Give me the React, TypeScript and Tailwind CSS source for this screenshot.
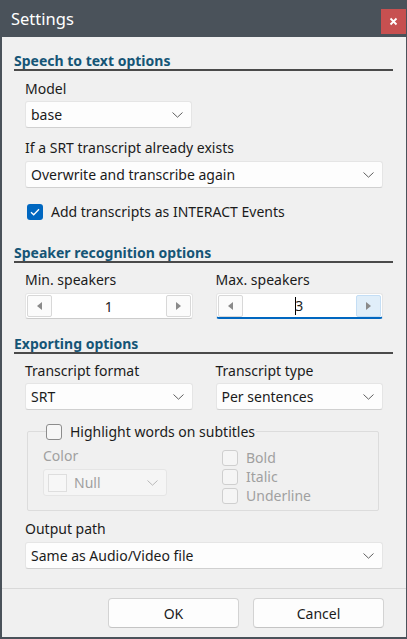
import React from "react";

function Chevron({ disabled = false }: { disabled?: boolean }) {
  return (
    <svg width="11" height="6" viewBox="0 0 11 6" className="shrink-0">
      <path d="M0.5 0.5 L5.5 5.2 L10.5 0.5" fill="none" stroke={disabled ? "#b8b8b8" : "#5f5f5f"} strokeWidth="1" />
    </svg>
  );
}

function Select({ value, className = "" }: { value: string; className?: string }) {
  return (
    <div
      className={`flex h-[27px] items-center justify-between rounded-[3px] border border-[#e5e5e5] border-b-[#d0d0d0] bg-[#fdfdfd] pl-[5px] pr-[8px] text-[#1b1b1b] ${className}`}
    >
      <span>{value}</span>
      <Chevron />
    </div>
  );
}

function Header({ children, className = "" }: { children: React.ReactNode; className?: string }) {
  return (
    <div className={`h-[19px] border-b-2 border-[#4a4a4a] text-[14px] font-bold leading-[17px] text-[#155576] ${className}`}>
      {children}
    </div>
  );
}

function Label({ children, className = "" }: { children: React.ReactNode; className?: string }) {
  return <div className={`h-[18px] leading-[18px] ${className}`}>{children}</div>;
}

function Box({ checked = false, disabled = false }: { checked?: boolean; disabled?: boolean }) {
  if (checked) {
    return (
      <span className="flex h-[16px] w-[16px] shrink-0 items-center justify-center rounded-[3px] bg-[#0067c0]">
        <svg width="10" height="8" viewBox="0 0 10 8">
          <path d="M1 4.2 L3.7 6.8 L9 1.3" fill="none" stroke="#fff" strokeWidth="1.3" />
        </svg>
      </span>
    );
  }
  return (
    <span
      className={`h-[16px] w-[16px] shrink-0 rounded-[3px] border ${
        disabled ? "border-[#cfcfcf] bg-[#f5f5f5]" : "border-[#8c8c8c] bg-[#f7f7f7]"
      }`}
    />
  );
}

function Spin({ value, focused = false }: { value: string; focused?: boolean }) {
  return (
    <div
      className={`flex h-[26px] items-center rounded-[3px] border border-[#e5e5e5] bg-white px-[1px] ${
        focused ? "border-b-2 border-b-[#0067c0]" : "border-b-[#cccccc]"
      }`}
    >
      <span className="flex h-[22px] w-[25px] items-center justify-center rounded-[2px] border border-[#d8d8d8] bg-[#fbfbfb]">
        <svg width="5" height="8" viewBox="0 0 5 8">
          <path d="M5 0 L0 4 L5 8 Z" fill="#8a8a8a" />
        </svg>
      </span>
      <span className="flex flex-1 items-center justify-center text-[#1b1b1b]">
        {focused && <span className="mr-[-1px] inline-block h-[18px] w-px bg-black" />}
        {value}
      </span>
      <span
        className={`flex h-[22px] w-[25px] items-center justify-center rounded-[2px] border ${
          focused ? "border-[#c4def5] bg-[#e0eef9]" : "border-[#d8d8d8] bg-[#fbfbfb]"
        }`}
      >
        <svg width="5" height="8" viewBox="0 0 5 8">
          <path d="M0 0 L5 4 L0 8 Z" fill="#8a8a8a" />
        </svg>
      </span>
    </div>
  );
}

export default function App() {
  return (
    <div className="flex h-[639px] w-[407px] flex-col bg-[#4a525a] pb-[2px] pl-[2px] pr-[1px] font-['Noto_Sans',sans-serif] text-[14px] text-[#1b1b1b]">
      {/* title bar */}
      <div className="flex h-[37px] shrink-0 items-start">
        <span className="mt-[7px] pl-[9px] text-[16.5px] leading-[24px] text-white">Settings</span>
        <button className="ml-auto mt-[9px] flex h-[25px] w-[25px] items-center justify-center bg-[#c75050]">
          <svg width="9" height="9" viewBox="0 0 9 9">
            <path d="M1.5 1.5 L7.5 7.5 M7.5 1.5 L1.5 7.5" stroke="#fff" strokeWidth="1.8" />
          </svg>
        </button>
      </div>

      <div className="flex flex-1 flex-col bg-[#f0f0f0]">
        <div className="flex-1 pl-[12px] pr-[13px]">
          <Header className="mt-[15px]">Speech to text options</Header>
          <div className="ml-[11px] mr-[10px]">
            <Label className="mt-[9px]">Model</Label>
            <Select value="base" className="mt-[3px] w-[167px]" />
            <Label className="mt-[11px]">If a SRT transcript already exists</Label>
            <Select value="Overwrite and transcribe again" className="mt-[4px]" />
            <div className="ml-[2px] mt-[16px] flex h-[16px] items-center gap-[8px] leading-[16px]">
              <Box checked />
              <span>Add transcripts as INTERACT Events</span>
            </div>
          </div>

          <Header className="mt-[24px]">Speaker recognition options</Header>
          <div className="ml-[11px] mr-[10px] grid grid-cols-2 gap-x-[23px]">
            <div>
              <Label className="mt-[8px]">Min. speakers</Label>
              <div className="mt-[4px]">
                <Spin value="1" />
              </div>
            </div>
            <div>
              <Label className="mt-[8px]">Max. speakers</Label>
              <div className="mt-[4px]">
                <Spin value="3" focused />
              </div>
            </div>
          </div>

          <Header className="mt-[16px]">Exporting options</Header>
          <div className="ml-[11px] mr-[10px]">
            <div className="grid grid-cols-2 gap-x-[23px]">
              <div>
                <Label className="mt-[8px]">Transcript format</Label>
                <Select value="SRT" className="mt-[3px]" />
              </div>
              <div>
                <Label className="mt-[8px]">Transcript type</Label>
                <Select value="Per sentences" className="mt-[3px]" />
              </div>
            </div>

            <fieldset className="ml-[2px] mr-[4px] mt-[13px] rounded-[2px] border border-[#dcdcdc] pb-[6px] pl-[15px]">
              <legend className="ml-[3px] flex h-[17px] items-center gap-[8px] pr-[1px] leading-[17px]">
                <Box />
                <span>Highlight words on subtitles</span>
              </legend>
              <div className="flex">
                <div className="w-[179px]">
                  <Label className="mt-[7px] text-[#a0a0a0]">Color</Label>
                  <div className="mt-[4px] flex h-[27px] w-[124px] items-center rounded-[3px] border border-[#e5e5e5] bg-[#f5f5f5] pl-[4px] pr-[8px] text-[#a0a0a0]">
                    <span className="h-[18px] w-[19px] border border-[#dedede] bg-[#f7f7f7]" />
                    <span className="ml-[7px] flex-1">Null</span>
                    <Chevron disabled />
                  </div>
                </div>
                <div className="mt-[10px] flex flex-col gap-[3px] text-[#a0a0a0]">
                  {["Bold", "Italic", "Underline"].map((t) => (
                    <div key={t} className="flex h-[16px] items-center gap-[8px] leading-[16px]">
                      <Box disabled />
                      <span>{t}</span>
                    </div>
                  ))}
                </div>
              </div>
            </fieldset>

            <Label className="mt-[9px]">Output path</Label>
            <Select value="Same as Audio/Video file" className="mt-[4px]" />
          </div>
        </div>

        <div className="flex shrink-0 justify-end gap-[14px] border-t border-[#d9d9d9] pb-[9px] pr-[22px] pt-[9px]">
          <button className="h-[30px] w-[131px] rounded-[4px] border border-[#d3d3d3] border-b-[#c4c4c4] bg-[#fdfdfd] text-[14px]">
            OK
          </button>
          <button className="h-[30px] w-[131px] rounded-[4px] border border-[#d3d3d3] border-b-[#c4c4c4] bg-[#fdfdfd] text-[14px]">
            Cancel
          </button>
        </div>
      </div>
    </div>
  );
}
